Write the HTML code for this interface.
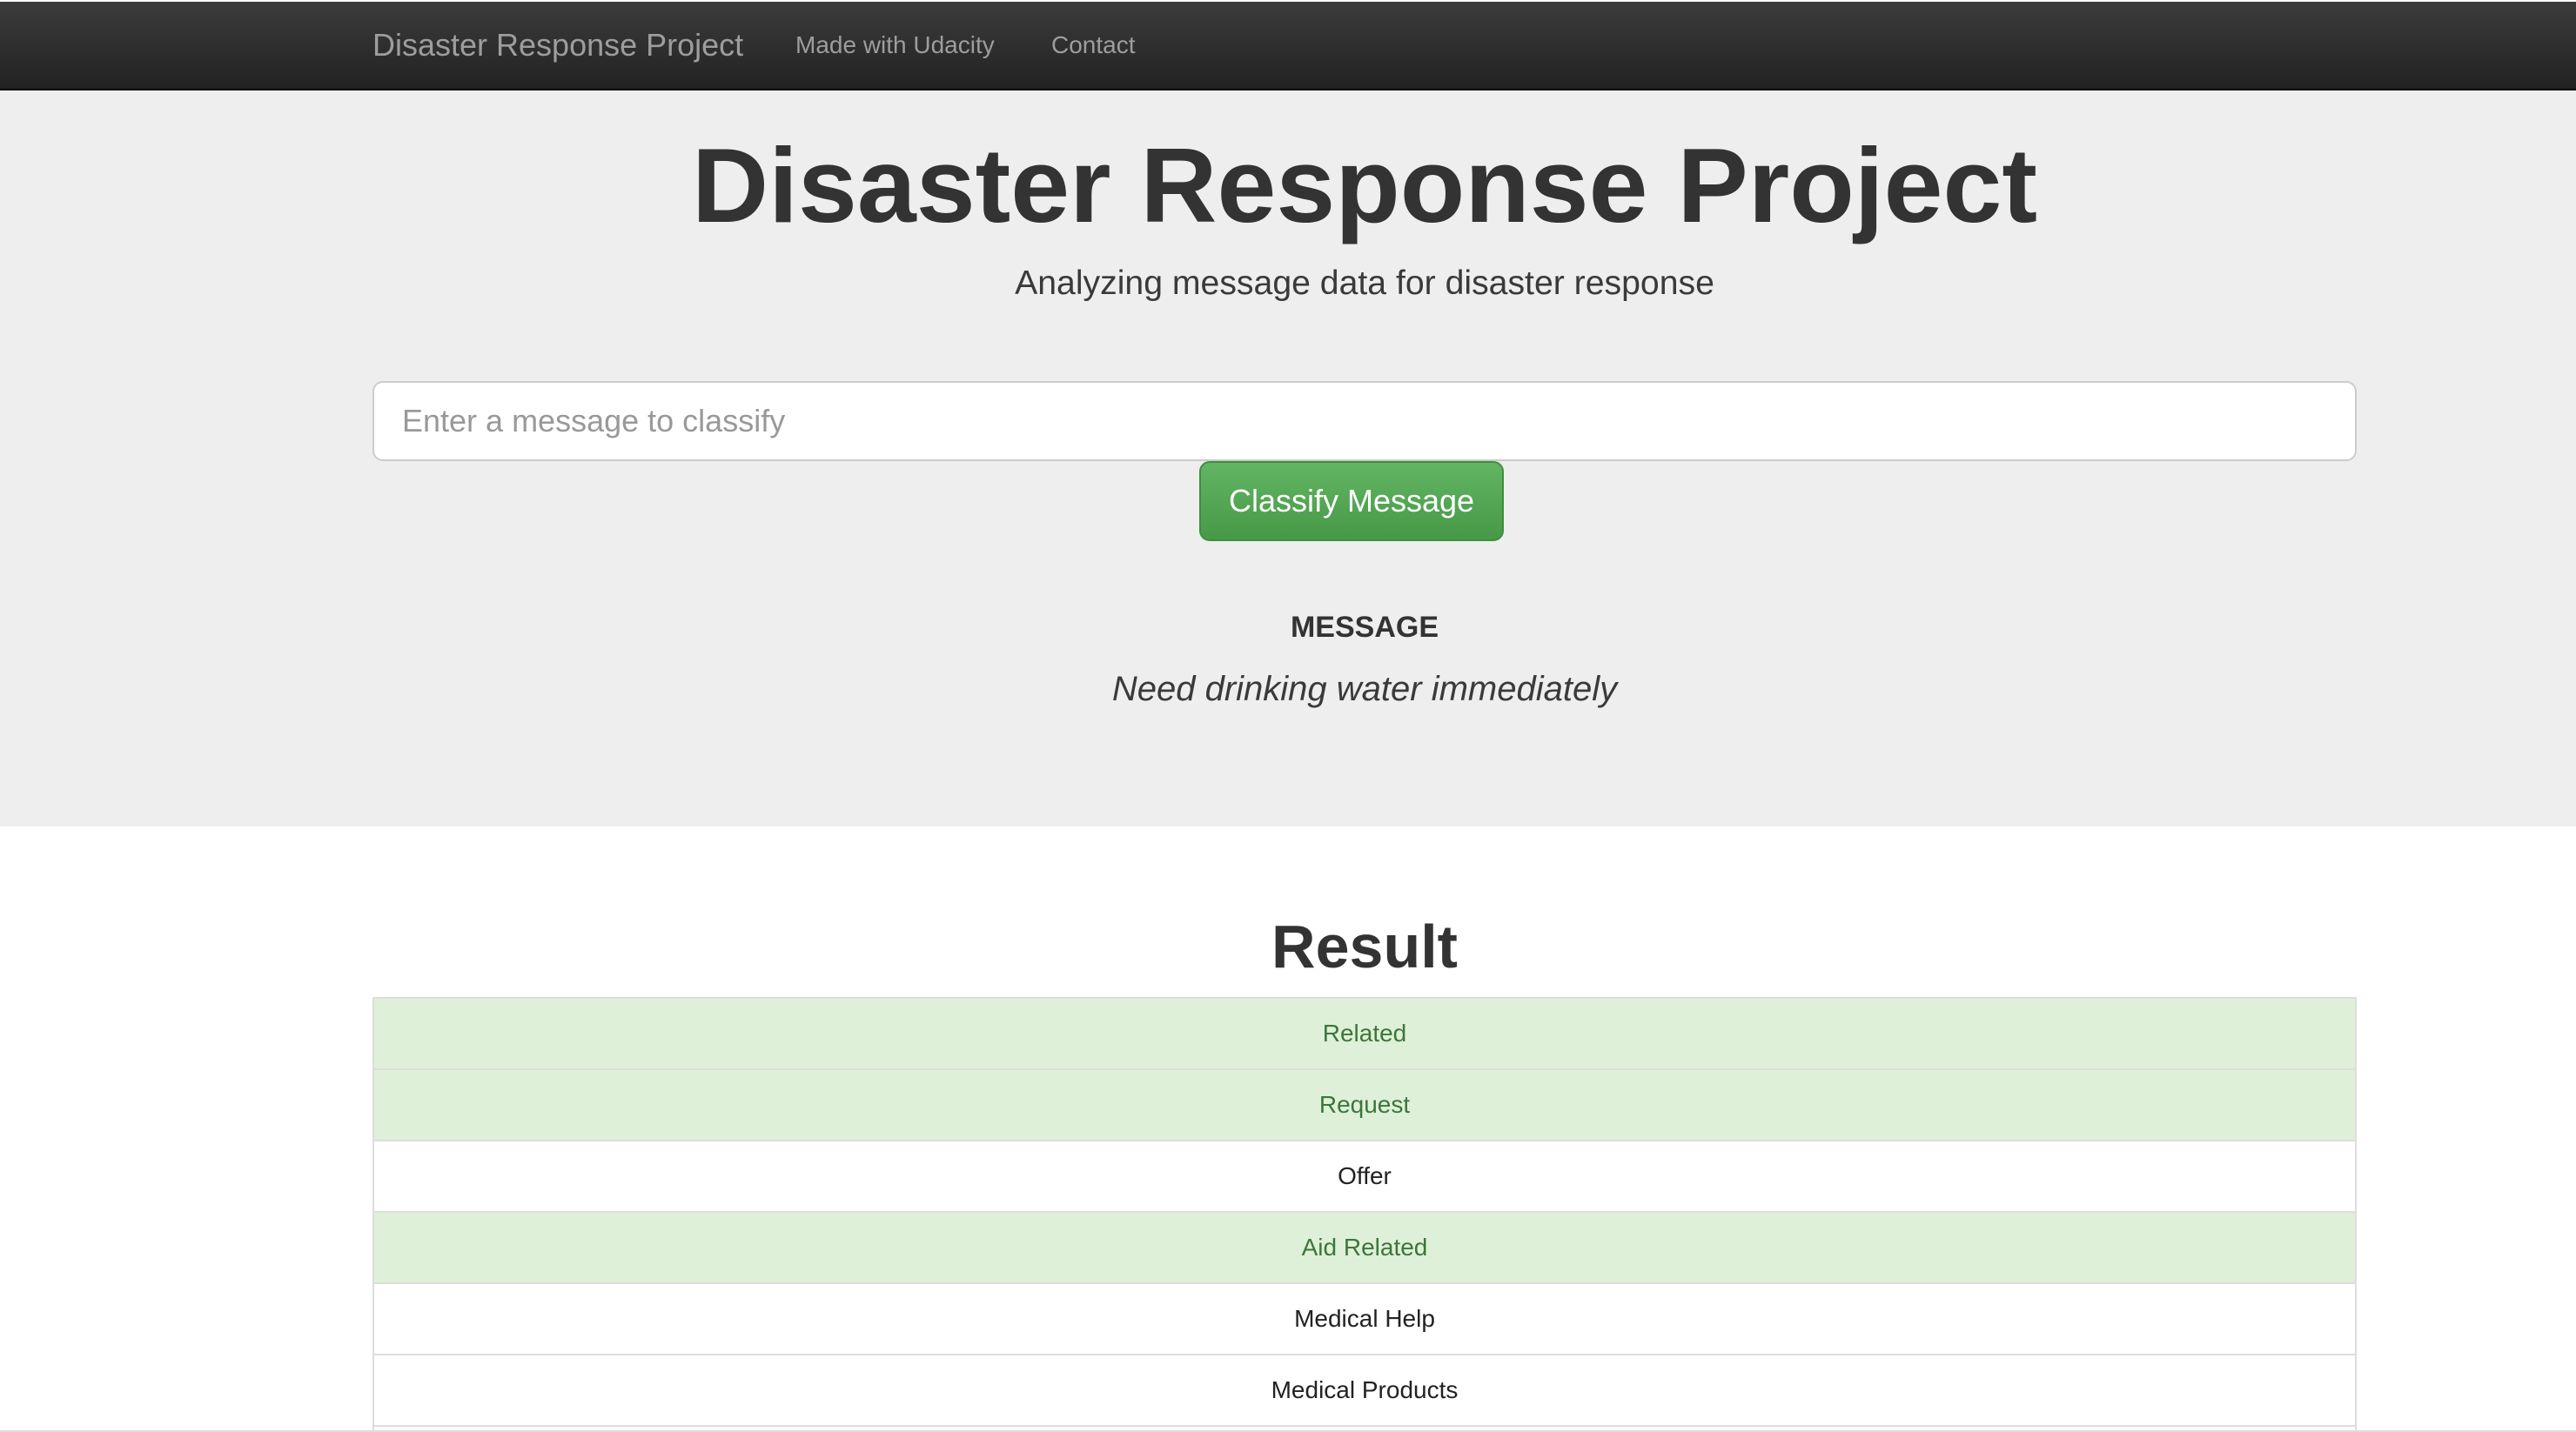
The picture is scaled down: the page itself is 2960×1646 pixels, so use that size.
<!DOCTYPE html>
<html><head><meta charset="utf-8"><style>
html,body{margin:0;padding:0;overflow:hidden}
html{height:1646px}
body{zoom:2;width:1480px;height:823px;overflow:hidden;position:relative;font-family:"Liberation Sans",Arial,sans-serif;color:#333;background:#fff;font-size:14px}
.nav{position:relative;margin-top:1px;height:50px;background:linear-gradient(#3c3c3c,#222);border-bottom:1px solid #080808}
.nav span{position:absolute;top:0;line-height:50px;color:#9d9d9d}
.brand{left:214px;font-size:18px}
.jumbo{background:#eee;height:423px;position:relative;text-align:center}
.c{position:absolute;left:214px;width:1140px}
h1{margin:0;font-size:61px;font-weight:bold;line-height:1}
.lead{font-size:19.6px;font-weight:300;color:#3a3a3a}
.input{position:absolute;left:214px;top:167px;border:1px solid #ccc;border-radius:6px;background:#fff;text-align:left;box-sizing:border-box;width:1140px;height:46px;padding-left:16px;line-height:44px;font-size:18px;color:#999}
.btn{position:absolute;left:689px;top:213px;width:175px;height:46px;border-radius:6px;background:linear-gradient(#62b562,#479947);border:1px solid #3e8f3e;box-sizing:border-box;color:#fff;font-size:18px;line-height:44px}
table{position:absolute;left:214px;top:572px;width:1140px;border-collapse:collapse;border:1px solid #ddd}
td{height:40px;border-top:1px solid #ddd;text-align:center;font-size:14px;padding:0;color:#222}
tr.g td{background:#dff0d8;color:#3c763d}
</style></head><body>
<div class="nav"><span class="brand">Disaster Response Project</span><span style="left:457px">Made with Udacity</span><span style="left:604px">Contact</span></div>
<div class="jumbo">
<div class="c" style="top:24px"><h1>Disaster Response Project</h1></div>
<div class="c lead" style="top:100px">Analyzing message data for disaster response</div>
<div class="input">Enter a message to classify</div>
<div class="btn">Classify Message</div>
<div class="c" style="top:299px;font-size:17px;font-weight:bold">MESSAGE</div>
<div class="c" style="top:333px;font-size:20px;font-style:italic;color:#3a3a3a">Need drinking water immediately</div>
</div>
<div class="c" style="top:523px;text-align:center;font-size:35px;font-weight:bold">Result</div>
<table>
<tr class="g"><td>Related</td></tr>
<tr class="g"><td>Request</td></tr>
<tr><td>Offer</td></tr>
<tr class="g"><td>Aid Related</td></tr>
<tr><td>Medical Help</td></tr>
<tr><td>Medical Products</td></tr>
</table>
<div style="position:absolute;left:214px;top:819px;width:1140px;height:2px;border-left:1px solid #ddd;border-right:1px solid #ddd;box-sizing:border-box"></div>
<div style="position:absolute;left:0;top:821px;width:1480px;height:2px;background:#ddd"></div>
</body></html>
